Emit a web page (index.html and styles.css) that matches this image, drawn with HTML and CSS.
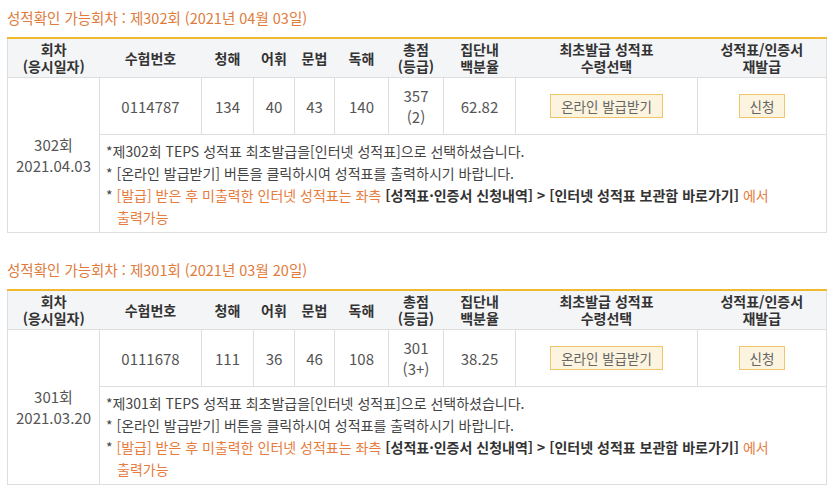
FILE: index.html
```html
<!DOCTYPE html>
<html lang="ko">
<head>
<meta charset="utf-8">
<title>성적확인</title>
<link rel="stylesheet" href="styles.css">
</head>
<body>
<section class="round">
  <h3 class="round-title">성적확인 가능회차 : 제302회 (2021년 04월 03일)</h3>
  <table class="score-table">
    <colgroup>
      <col class="c-round"><col class="c-no"><col class="c-l"><col class="c-v"><col class="c-g"><col class="c-r"><col class="c-total"><col class="c-pct"><col class="c-first"><col class="c-re">
    </colgroup>
    <thead>
      <tr>
        <th>회차<br>(응시일자)</th>
        <th>수험번호</th>
        <th>청해</th>
        <th>어휘</th>
        <th>문법</th>
        <th>독해</th>
        <th>총점<br>(등급)</th>
        <th>집단내<br>백분율</th>
        <th>최초발급 성적표<br>수령선택</th>
        <th>성적표/인증서<br>재발급</th>
      </tr>
    </thead>
    <tbody>
      <tr class="data-row">
        <td rowspan="2" class="round-cell">302회<br>2021.04.03</td>
        <td>0114787</td>
        <td>134</td>
        <td>40</td>
        <td>43</td>
        <td>140</td>
        <td>357<br>(2)</td>
        <td>62.82</td>
        <td><button class="btn" type="button">온라인 발급받기</button></td>
        <td><button class="btn" type="button">신청</button></td>
      </tr>
      <tr class="note-row">
        <td colspan="9" class="notes">
          <p class="note">*제302회 TEPS 성적표 최초발급을[인터넷 성적표]으로 선택하셨습니다.</p>
          <p class="note">* [온라인 발급받기] 버튼을 클릭하시여 성적표를 출력하시기 바랍니다.</p>
          <p class="note">* <span class="accent">[발급] 받은 후 미출력한 인터넷 성적표는 좌측</span> <strong class="path">[성적표·인증서 신청내역] &gt; [인터넷 성적표 보관함 바로가기]</strong> <span class="accent">에서</span> <span class="accent">출력가능</span></p>
        </td>
      </tr>
    </tbody>
  </table>
</section>

<section class="round">
  <h3 class="round-title">성적확인 가능회차 : 제301회 (2021년 03월 20일)</h3>
  <table class="score-table">
    <colgroup>
      <col class="c-round"><col class="c-no"><col class="c-l"><col class="c-v"><col class="c-g"><col class="c-r"><col class="c-total"><col class="c-pct"><col class="c-first"><col class="c-re">
    </colgroup>
    <thead>
      <tr>
        <th>회차<br>(응시일자)</th>
        <th>수험번호</th>
        <th>청해</th>
        <th>어휘</th>
        <th>문법</th>
        <th>독해</th>
        <th>총점<br>(등급)</th>
        <th>집단내<br>백분율</th>
        <th>최초발급 성적표<br>수령선택</th>
        <th>성적표/인증서<br>재발급</th>
      </tr>
    </thead>
    <tbody>
      <tr class="data-row">
        <td rowspan="2" class="round-cell">301회<br>2021.03.20</td>
        <td>0111678</td>
        <td>111</td>
        <td>36</td>
        <td>46</td>
        <td>108</td>
        <td>301<br>(3+)</td>
        <td>38.25</td>
        <td><button class="btn" type="button">온라인 발급받기</button></td>
        <td><button class="btn" type="button">신청</button></td>
      </tr>
      <tr class="note-row">
        <td colspan="9" class="notes">
          <p class="note">*제301회 TEPS 성적표 최초발급을[인터넷 성적표]으로 선택하셨습니다.</p>
          <p class="note">* [온라인 발급받기] 버튼을 클릭하시여 성적표를 출력하시기 바랍니다.</p>
          <p class="note">* <span class="accent">[발급] 받은 후 미출력한 인터넷 성적표는 좌측</span> <strong class="path">[성적표·인증서 신청내역] &gt; [인터넷 성적표 보관함 바로가기]</strong> <span class="accent">에서</span> <span class="accent">출력가능</span></p>
        </td>
      </tr>
    </tbody>
  </table>
</section>
</body>
</html>
```

FILE: styles.css
```css
html, body {
  margin: 0;
  padding: 0;
  background: #ffffff;
}

body {
  display: flex;
  flex-direction: column;
  gap: 27px;
  padding: 8px 7px 0;
  font-family: "Noto Sans CJK KR", "Noto Sans", sans-serif;
  color: #444;
}

.round-title {
  margin: 0 0 9px;
  font-size: 14.5px;
  line-height: 20px;
  font-weight: normal;
  color: #e07b3c;
}

.score-table {
  width: 100%;
  table-layout: fixed;
  border-collapse: collapse;
  border-top: 2px solid #f0b92e;
  border-left: 1px solid #dedede;
  border-right: 1px solid #dedede;
  border-bottom: 1px solid #dedede;
}

.c-round { width: 92px; }
.c-no { width: 102px; }
.c-l { width: 52px; }
.c-v { width: 41px; }
.c-g { width: 40px; }
.c-r { width: 54px; }
.c-total { width: 55px; }
.c-pct { width: 72px; }
.c-first { width: 182px; }
.c-re { width: 129px; }

.score-table th {
  background: #f4f5f7;
  color: #333;
  font-size: 14px;
  font-weight: bold;
  line-height: 17px;
  padding: 2px 2px;
  text-align: center;
  border-bottom: 1px solid #dedede;
}

.score-table td {
  border: 1px solid #dedede;
  text-align: center;
  font-size: 15px;
  line-height: 21px;
  color: #555;
  padding: 7px 2px;
}

.round-cell {
  vertical-align: middle;
}

.btn {
  font-family: inherit;
  font-size: 13.5px;
  line-height: 20px;
  color: #666;
  background: #fcf4df;
  border: 1px solid #f0c66a;
  padding: 1px 10px;
  margin: 0;
  cursor: pointer;
}

.score-table td.notes {
  text-align: left;
  padding: 5px 6px 4px;
  font-size: 14px;
  line-height: 22px;
  color: #444;
  word-break: keep-all;
}

.note {
  margin: 0;
  padding-left: 11px;
  text-indent: -11px;
}

.accent {
  color: #e67c3e;
}

.path {
  color: #333;
  font-weight: bold;
}
```
